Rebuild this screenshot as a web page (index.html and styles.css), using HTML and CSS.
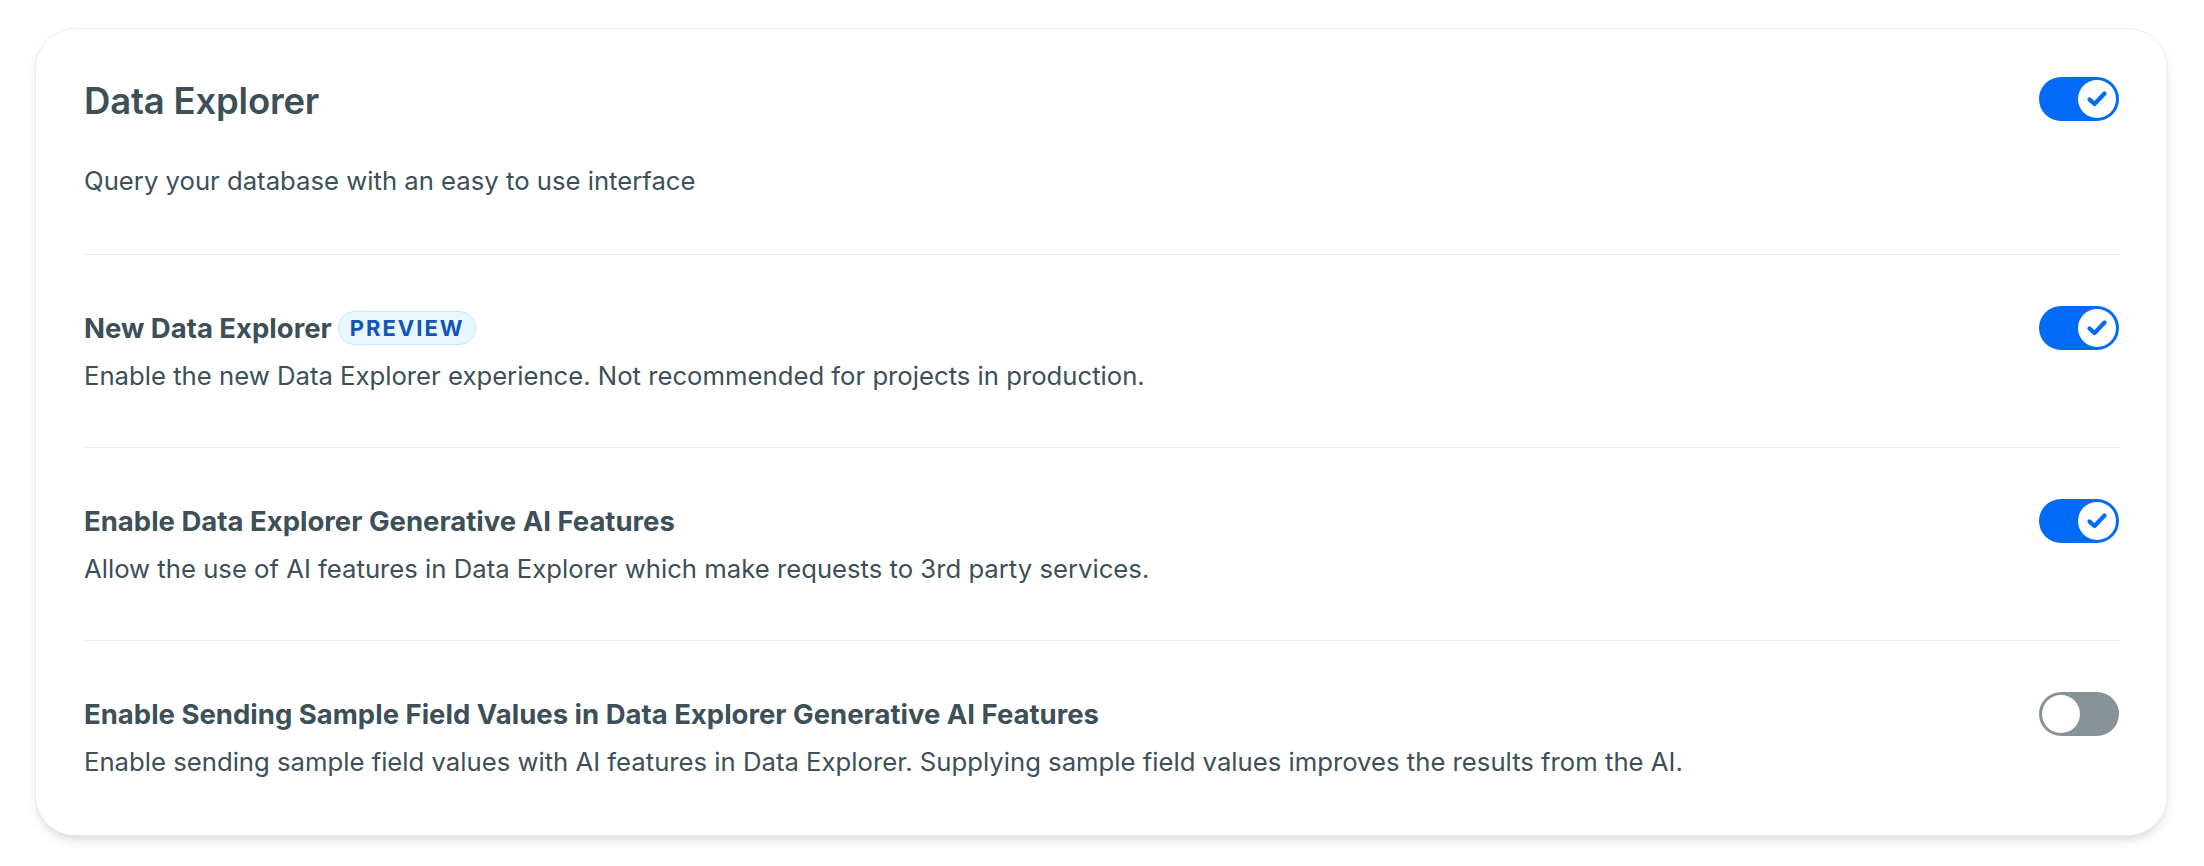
FILE: index.html
```html
<!DOCTYPE html>
<html lang="en">
<head>
    <meta charset="UTF-8">
    <meta name="viewport" content="width=device-width, initial-scale=1.0">
    <title>Data Explorer settings</title>
    <link rel="stylesheet" href="styles.css">
</head>
<body>

    <div class="card">
        <!-- header -->
        <div class="card-header">
            <div class="head-line">
                <h2 class="card-title">Data Explorer</h2>
                <button class="toggle on" aria-pressed="true">
                    <span class="knob">
                        <svg viewBox="0 0 38 38" width="38" height="38"><polyline points="11.5,19.5 16.5,24 26.5,13.5" fill="none" stroke="#016BF8" stroke-width="4.2" stroke-linecap="round" stroke-linejoin="round"/></svg>
                    </span>
                </button>
            </div>
            <p class="card-desc">Query your database with an easy to use interface</p>
        </div>

        <!-- settings -->
        <div class="setting">
            <div class="head-line">
                <div class="setting-title">New Data Explorer <span class="badge">PREVIEW</span></div>
                <button class="toggle on" aria-pressed="true">
                    <span class="knob">
                        <svg viewBox="0 0 38 38" width="38" height="38"><polyline points="11.5,19.5 16.5,24 26.5,13.5" fill="none" stroke="#016BF8" stroke-width="4.2" stroke-linecap="round" stroke-linejoin="round"/></svg>
                    </span>
                </button>
            </div>
            <p class="setting-desc">Enable the new Data Explorer experience. Not recommended for projects in production.</p>
        </div>

        <div class="setting">
            <div class="head-line">
                <div class="setting-title">Enable Data Explorer Generative AI Features</div>
                <button class="toggle on" aria-pressed="true">
                    <span class="knob">
                        <svg viewBox="0 0 38 38" width="38" height="38"><polyline points="11.5,19.5 16.5,24 26.5,13.5" fill="none" stroke="#016BF8" stroke-width="4.2" stroke-linecap="round" stroke-linejoin="round"/></svg>
                    </span>
                </button>
            </div>
            <p class="setting-desc">Allow the use of AI features in Data Explorer which make requests to 3rd party services.</p>
        </div>

        <div class="setting">
            <div class="head-line">
                <div class="setting-title">Enable Sending Sample Field Values in Data Explorer Generative AI Features</div>
                <button class="toggle off" aria-pressed="false">
                    <span class="knob"></span>
                </button>
            </div>
            <p class="setting-desc">Enable sending sample field values with AI features in Data Explorer. Supplying sample field values improves the results from the AI.</p>
        </div>
    </div>

</body>
</html>
```

FILE: styles.css
```css
/* page */
body {
    margin: 0;
    padding: 28px 36px 33px 35px;
    background: #ffffff;
    font-family: Inter, "Noto Sans", sans-serif;
    color: #3D4F58;
}

.card {
    border: 1px solid #E8EDEB;
    border-radius: 40px;
    background: white;
    padding: 0 48px;
    box-shadow: 0px 6px 12px -4px rgba(0, 30, 43, 0.22);
}

/* header */
.card-header {
    padding: 50px 0 56px;
    border-bottom: 1px solid #E8EDEB;
}

.head-line {
    display: flex;
    justify-content: space-between;
    align-items: center;
}

.card-title {
    margin: 0;
    font-size: 36.5px;
    line-height: 45px;
    font-weight: 600;
    letter-spacing: -0.2px;
}

.card-header .toggle {
    margin: -8px 0 -2px;
}

.card-desc {
    margin: 40px 0 0;
    font-size: 25.7px;
    line-height: 34px;
}

/* rows */
.setting {
    padding: 56px 0 54px;
    border-bottom: 1px solid #E8EDEB;
}

.setting:last-child {
    border-bottom: none;
    padding-bottom: 56px;
}

.setting-title {
    display: flex;
    align-items: center;
    font-size: 27.5px;
    line-height: 34px;
    font-weight: 700;
}

.setting-desc {
    margin: 14px 0 0;
    font-size: 25.7px;
    line-height: 34px;
}

.badge {
    margin-left: 6px;
    padding: 0 10px 0 11px;
    height: 34px;
    box-sizing: border-box;
    display: inline-flex;
    align-items: center;
    border: 1px solid #C3E7FE;
    border-radius: 20px;
    background: #E9F7FF;
    color: #1254B7;
    font-size: 22px;
    font-weight: 700;
    letter-spacing: 2px;
}

/* toggles */
.toggle {
    flex-shrink: 0;
    width: 80px;
    height: 44px;
    margin: -5px 0;
    padding: 0 3px;
    border: none;
    border-radius: 22px;
    display: flex;
    align-items: center;
    cursor: pointer;
}

.toggle.on {
    background: #016BF8;
    justify-content: flex-end;
}

.toggle.off {
    background: #889397;
    justify-content: flex-start;
}

.knob {
    width: 38px;
    height: 38px;
    border-radius: 50%;
    background: white;
    display: flex;
}
```
